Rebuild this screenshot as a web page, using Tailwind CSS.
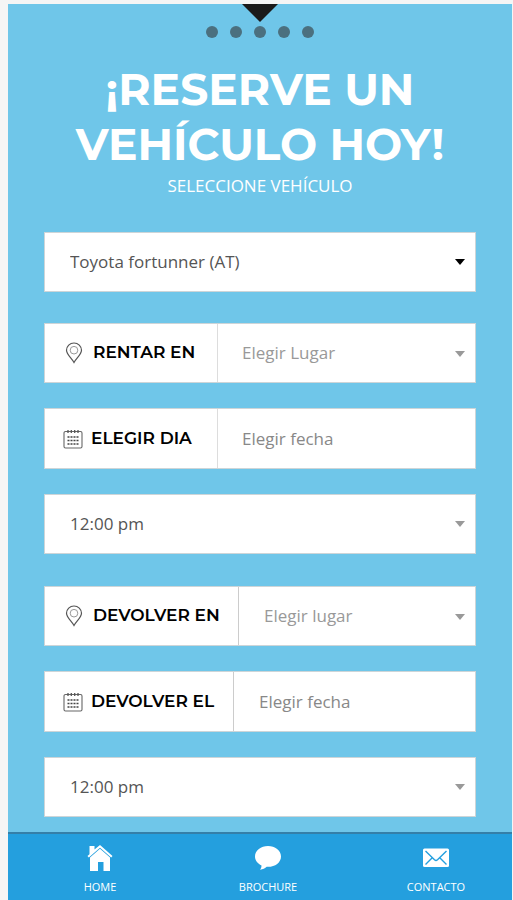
<!DOCTYPE html>
<html lang="es">
<head>
  <meta charset="UTF-8">
  <meta name="viewport" content="width=device-width, initial-scale=1.0">
  <title>Reserve un vehículo</title>
  <script src="https://cdn.jsdelivr.net/npm/@tailwindcss/browser@4"></script>
</head>
<body class="bg-[#f5f5f5] font-['Open_Sans',sans-serif]">
  <!-- iconos compartidos -->
  <svg class="hidden">
    <symbol id="pin" viewBox="0 0 18 22">
      <path d="M9 20.500C7 16.500 1.500 12.500 1.500 8.300a7.500 7.300 0 0 1 15 0C16.500 12.500 11 16.500 9 20.500Z" fill="none" stroke="#555" stroke-width="1.200"/>
      <circle cx="9" cy="8.200" r="3.800" fill="none" stroke="#999" stroke-width="1"/>
    </symbol>
    <symbol id="calendar" viewBox="0 0 20 20">
      <path d="M2.500 2.500h15a1.500 1.500 0 0 1 1.500 1.500v13.500a1.500 1.500 0 0 1-1.500 1.500h-15A1.500 1.500 0 0 1 1 17.500V4a1.500 1.500 0 0 1 1.500-1.500Z" fill="none" stroke="#666" stroke-width="1.100"/>
      <path d="M5 1v3M8.300 1v3M11.700 1v3M15 1v3" stroke="#555" stroke-width="1.300"/>
      <path d="M4.500 8h11M4.500 11.500h11M4.500 15h11" stroke="#444" stroke-width="1.700" stroke-dasharray="2 1"/>
    </symbol>
    <symbol id="caret" viewBox="0 0 10 6">
      <path d="M0 0h10L5 6Z" fill="currentColor"/>
    </symbol>
  </svg>

  <div class="ml-2 mr-px mt-1 min-h-[calc(100vh-4px)] flex flex-col bg-[#6fc6e9]">
    <main class="flex-1 px-9 pb-[15px]">
      <div class="flex flex-col items-center">
        <svg class="w-9 h-[18px]" viewBox="0 0 36 18"><path d="M0 0h36L18 18Z" fill="#1a1a1a"/></svg>
        <div class="flex gap-3 mt-1">
          <span class="size-3 rounded-full bg-[#4b707f]"></span>
          <span class="size-3 rounded-full bg-[#4b707f]"></span>
          <span class="size-3 rounded-full bg-[#4b707f]"></span>
          <span class="size-3 rounded-full bg-[#4b707f]"></span>
          <span class="size-3 rounded-full bg-[#4b707f]"></span>
        </div>
      </div>

      <h1 class="mt-6 text-center text-white font-bold text-[44px] leading-[55px] font-['Montserrat','Inter',sans-serif]">¡RESERVE UN<br>VEHÍCULO HOY!</h1>
      <p class="mt-0.5 text-center text-white text-[17px] leading-6"><label for="vehicle">SELECCIONE VEHÍCULO</label></p>

      <form>
        <div class="relative mt-[34px] h-[60px] bg-white border border-[#cdd5d8] text-[#555]">
          <select id="vehicle" class="appearance-none size-full pl-[25px] pr-10 text-[17px]">
            <option>Toyota fortunner (AT)</option>
          </select>
          <svg class="absolute right-2.5 top-[26px] w-2.5 h-1.5 text-black pointer-events-none"><use href="#caret"/></svg>
        </div>

        <!-- recogida -->
        <div class="relative mt-[31px] h-[60px] flex bg-white border border-[#cdd5d8]">
          <label for="pickup-place" class="w-[173px] shrink-0 flex items-center gap-2.5 pl-5 border-r border-[#ddd] text-black font-semibold text-[17px] font-['Montserrat','Inter',sans-serif]">
            <svg class="w-[18px] h-[22px]"><use href="#pin"/></svg>RENTAR EN
          </label>
          <select id="pickup-place" class="appearance-none flex-1 min-w-0 pl-6 pr-10 text-[17px] text-[#999]">
            <option>Elegir Lugar</option>
          </select>
          <svg class="absolute right-2.5 top-[27px] w-2.5 h-1.5 text-[#999] pointer-events-none"><use href="#caret"/></svg>
        </div>
        <div class="mt-[25px] h-[61px] flex bg-white border border-[#cdd5d8]">
          <label for="pickup-date" class="w-[173px] shrink-0 flex items-center gap-2 pl-[18px] border-r border-[#ddd] text-black font-semibold text-[17px] font-['Montserrat','Inter',sans-serif]">
            <svg class="size-5"><use href="#calendar"/></svg>ELEGIR DIA
          </label>
          <input id="pickup-date" type="text" placeholder="Elegir fecha" class="flex-1 min-w-0 pl-6 text-[17px] placeholder:text-[#888]">
        </div>
        <div class="relative mt-[25px] h-[60px] bg-white border border-[#cdd5d8] text-[#555]">
          <select aria-label="Hora de recogida" class="appearance-none size-full pl-[25px] pr-10 text-[17px]">
            <option>12:00 pm</option>
          </select>
          <svg class="absolute right-2.5 top-[26px] w-2.5 h-1.5 text-[#999] pointer-events-none"><use href="#caret"/></svg>
        </div>

        <!-- devolución -->
        <div class="relative mt-8 h-[60px] flex bg-white border border-[#cdd5d8]">
          <label for="return-place" class="w-[194px] shrink-0 flex items-center gap-2.5 pl-5 border-r border-[#ccc] text-black font-semibold text-[17px] font-['Montserrat','Inter',sans-serif]">
            <svg class="w-[18px] h-[22px]"><use href="#pin"/></svg>DEVOLVER EN
          </label>
          <select id="return-place" class="appearance-none flex-1 min-w-0 pl-[25px] pr-10 text-[17px] text-[#999]">
            <option>Elegir lugar</option>
          </select>
          <svg class="absolute right-2.5 top-[27px] w-2.5 h-1.5 text-[#999] pointer-events-none"><use href="#caret"/></svg>
        </div>
        <div class="mt-[25px] h-[61px] flex bg-white border border-[#cdd5d8]">
          <label for="return-date" class="w-[189px] shrink-0 flex items-center gap-2 pl-[18px] border-r border-[#ccc] text-black font-semibold text-[17px] font-['Montserrat','Inter',sans-serif]">
            <svg class="size-5"><use href="#calendar"/></svg>DEVOLVER EL
          </label>
          <input id="return-date" type="text" placeholder="Elegir fecha" class="flex-1 min-w-0 pl-[25px] text-[17px] placeholder:text-[#888]">
        </div>
        <div class="relative mt-[25px] h-[60px] bg-white border border-[#cdd5d8] text-[#555]">
          <select aria-label="Hora de devolución" class="appearance-none size-full pl-[25px] pr-10 text-[17px]">
            <option>12:00 pm</option>
          </select>
          <svg class="absolute right-2.5 top-[26px] w-2.5 h-1.5 text-[#999] pointer-events-none"><use href="#caret"/></svg>
        </div>
      </form>
    </main>

    <nav class="h-[68px] border-t-2 border-[#357fa8] bg-[#249fde] overflow-hidden">
      <div class="grid grid-cols-3 ml-2 -mr-2 pt-2.5 text-white text-[11px] leading-4">
        <a href="#" class="flex flex-col items-center gap-[7px]">
          <svg class="w-[26px] h-7" viewBox="0 0 26 28" fill="#fff">
            <path d="M2.500 2h5v3.500L13 1l12.500 11-1.300 1.500L13 3.800 1.800 13.500.5 12l2-1.800Z"/>
            <path d="M13 4.800l10 8.800V27h-6.500v-9h-5.500v9H3V13.600Z"/>
          </svg>
          HOME
        </a>
        <a href="#" class="flex flex-col items-center gap-[7px]">
          <svg class="w-[26px] h-7" viewBox="0 0 26 28" fill="#fff">
            <path d="M13 2C6 2 0 6.500 0 12.500c0 3.800 2.600 7 6.500 8.900.1 1.800-.7 3.300-1.500 4.400 2.900-.4 5.200-1.600 6.700-3 7.800.6 14.300-4 14.300-10.300C26 6.500 20 2 13 2Z"/>
          </svg>
          BROCHURE
        </a>
        <a href="#" class="flex flex-col items-center gap-[7px]">
          <svg class="w-[26px] h-7" viewBox="0 0 26 28">
            <rect y="4.500" width="26" height="18.500" rx="1.500" fill="#fff"/>
            <path d="M2.500 7 11.500 15.800q1.500 1.400 3 0L23.500 7M2.500 20.500l6.500-6.500M23.500 20.500 17 14" fill="none" stroke="#249fde" stroke-width="1.400"/>
          </svg>
          CONTACTO
        </a>
      </div>
    </nav>
  </div>
</body>
</html>
